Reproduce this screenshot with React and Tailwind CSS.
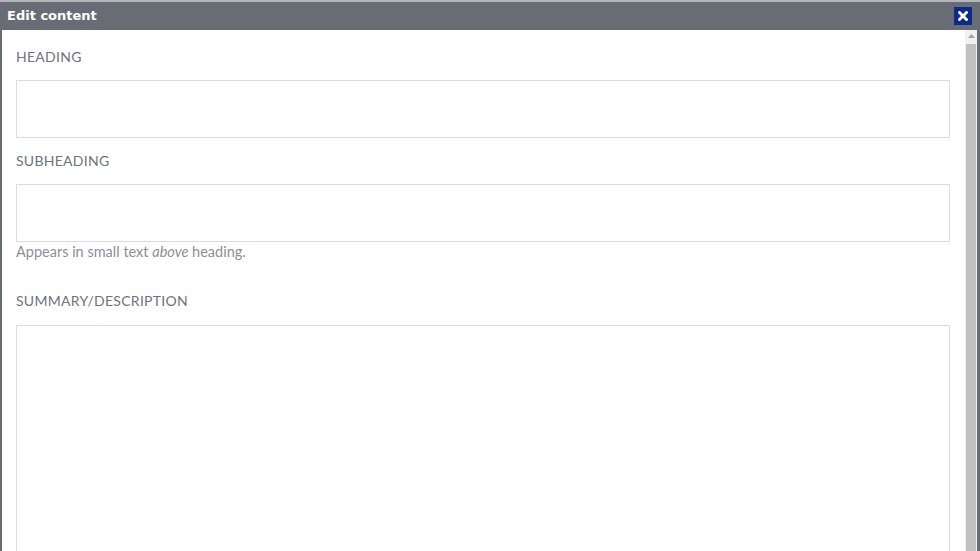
export default function App() {
  return (
    <div className="w-[980px] h-[551px] overflow-hidden flex flex-col bg-[#676c75]">
      <div className="h-[2px] bg-[#b4b6ba]" />
      <div className="h-[28px] flex items-center justify-between pl-[7px] pr-[8px]">
        <span className="text-white font-bold text-[13px] font-['DejaVu_Sans',sans-serif]">Edit content</span>
        <button className="w-[18px] h-[18px] bg-[#0b2a8a] flex items-center justify-center">
          <svg width="10" height="10" viewBox="0 0 10 10">
            <path d="M1.5 1.5 L8.5 8.5 M8.5 1.5 L1.5 8.5" stroke="white" strokeWidth="2.8" strokeLinecap="square" />
          </svg>
        </button>
      </div>
      <div className="flex-1 flex pl-[2px] pr-[3px] min-h-0">
        <div className="flex-1 bg-white pl-[14px] pr-[15px] pt-[17px] font-['Lato',sans-serif] min-h-0">
          <label className="block text-[14px] leading-[20px] tracking-[0.02em] text-[#6e737c]">HEADING</label>
          <div className="mt-[13px] h-[58px] border border-[#dcdcdc]" />
          <label className="block mt-[13px] text-[14px] leading-[20px] tracking-[0.02em] text-[#6e737c]">SUBHEADING</label>
          <div className="mt-[13px] h-[58px] border border-[#dcdcdc]" />
          <p className="text-[14.5px] leading-[20px] text-[#8b9097]">
            Appears in small text <em>above</em> heading.
          </p>
          <label className="block mt-[29px] text-[14px] leading-[20px] tracking-[0.02em] text-[#6e737c]">SUMMARY/DESCRIPTION</label>
          <div className="mt-[14px] h-[300px] border border-[#dcdcdc]" />
        </div>
        <div className="w-[12px] bg-[#f1f1f1] flex flex-col">
          <div className="h-[12px] flex items-center justify-center">
            <svg width="7" height="4" viewBox="0 0 7 4">
              <path d="M0 4 L3.5 0 L7 4 Z" fill="#a3a3a3" />
            </svg>
          </div>
          <div className="flex-1 mx-[1px] mt-[2px] bg-[#c1c1c1]" />
        </div>
      </div>
    </div>
  );
}
